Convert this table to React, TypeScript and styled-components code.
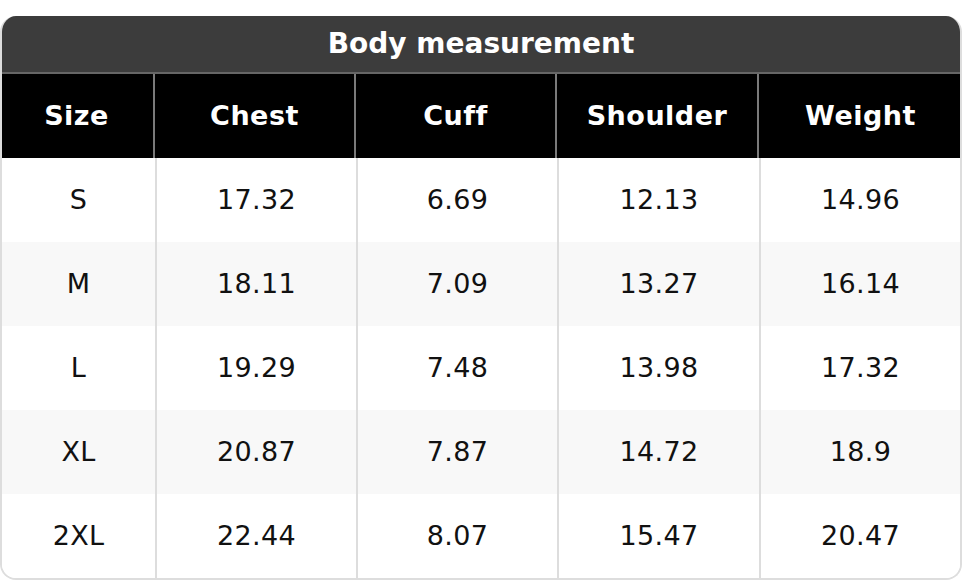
import React from "react";
import styled, { createGlobalStyle } from "styled-components";

const Global = createGlobalStyle`
  html, body { margin: 0; padding: 0; background: #ffffff; }
  body { font-family: "DejaVu Sans", Verdana, sans-serif; }
`;

const Page = styled.div`
  padding-top: 16px;
`;

const Table = styled.div`
  width: 962px;
  box-sizing: border-box;
  border: 2px solid #dddddd;
  border-top: none;
  border-radius: 16px;
  overflow: hidden;
  background: #ffffff;
`;

const Title = styled.div`
  height: 58px;
  box-sizing: border-box;
  padding-bottom: 2px;
  background: #3c3c3c;
  color: #ffffff;
  font-weight: 700;
  font-size: 28px;
  display: flex;
  align-items: center;
  justify-content: center;
  border-bottom: 2px solid #666666;
  margin: 0 -2px;
`;

const Row = styled.div<{ $striped?: boolean; $head?: boolean }>`
  display: grid;
  grid-template-columns: 153px 201px 201px 202px 1fr;
  height: 84px;
  background: ${(p) => (p.$head ? "#000000" : p.$striped ? "#f8f8f8" : "#ffffff")};
  margin: ${(p) => (p.$head ? "0 -2px" : "0")};
`;

const Cell = styled.div<{ $head?: boolean; $first?: boolean }>`
  display: flex;
  align-items: center;
  justify-content: center;
  box-sizing: border-box;
  padding-bottom: 2px;
  font-size: 27px;
  font-weight: ${(p) => (p.$head ? 700 : 400)};
  color: ${(p) => (p.$head ? "#ffffff" : "#111111")};
  border-left: ${(p) => (p.$first ? "none" : `2px solid ${p.$head ? "#7a7a7a" : "#dddddd"}`)};
  letter-spacing: ${(p) => (p.$head ? "0.5px" : "0.3px")};
`;

const headers = ["Size", "Chest", "Cuff", "Shoulder", "Weight"];
const rows = [
  ["S", "17.32", "6.69", "12.13", "14.96"],
  ["M", "18.11", "7.09", "13.27", "16.14"],
  ["L", "19.29", "7.48", "13.98", "17.32"],
  ["XL", "20.87", "7.87", "14.72", "18.9"],
  ["2XL", "22.44", "8.07", "15.47", "20.47"],
];

export default function App() {
  return (
    <Page>
      <Global />
      <Table>
        <Title>Body measurement</Title>
        <Row $head>
          {headers.map((h, i) => (
            <Cell key={h} $head $first={i === 0}>
              {h}
            </Cell>
          ))}
        </Row>
        {rows.map((r, ri) => (
          <Row key={ri} $striped={ri % 2 === 1}>
            {r.map((c, i) => (
              <Cell key={i} $first={i === 0}>
                {c}
              </Cell>
            ))}
          </Row>
        ))}
      </Table>
    </Page>
  );
}
